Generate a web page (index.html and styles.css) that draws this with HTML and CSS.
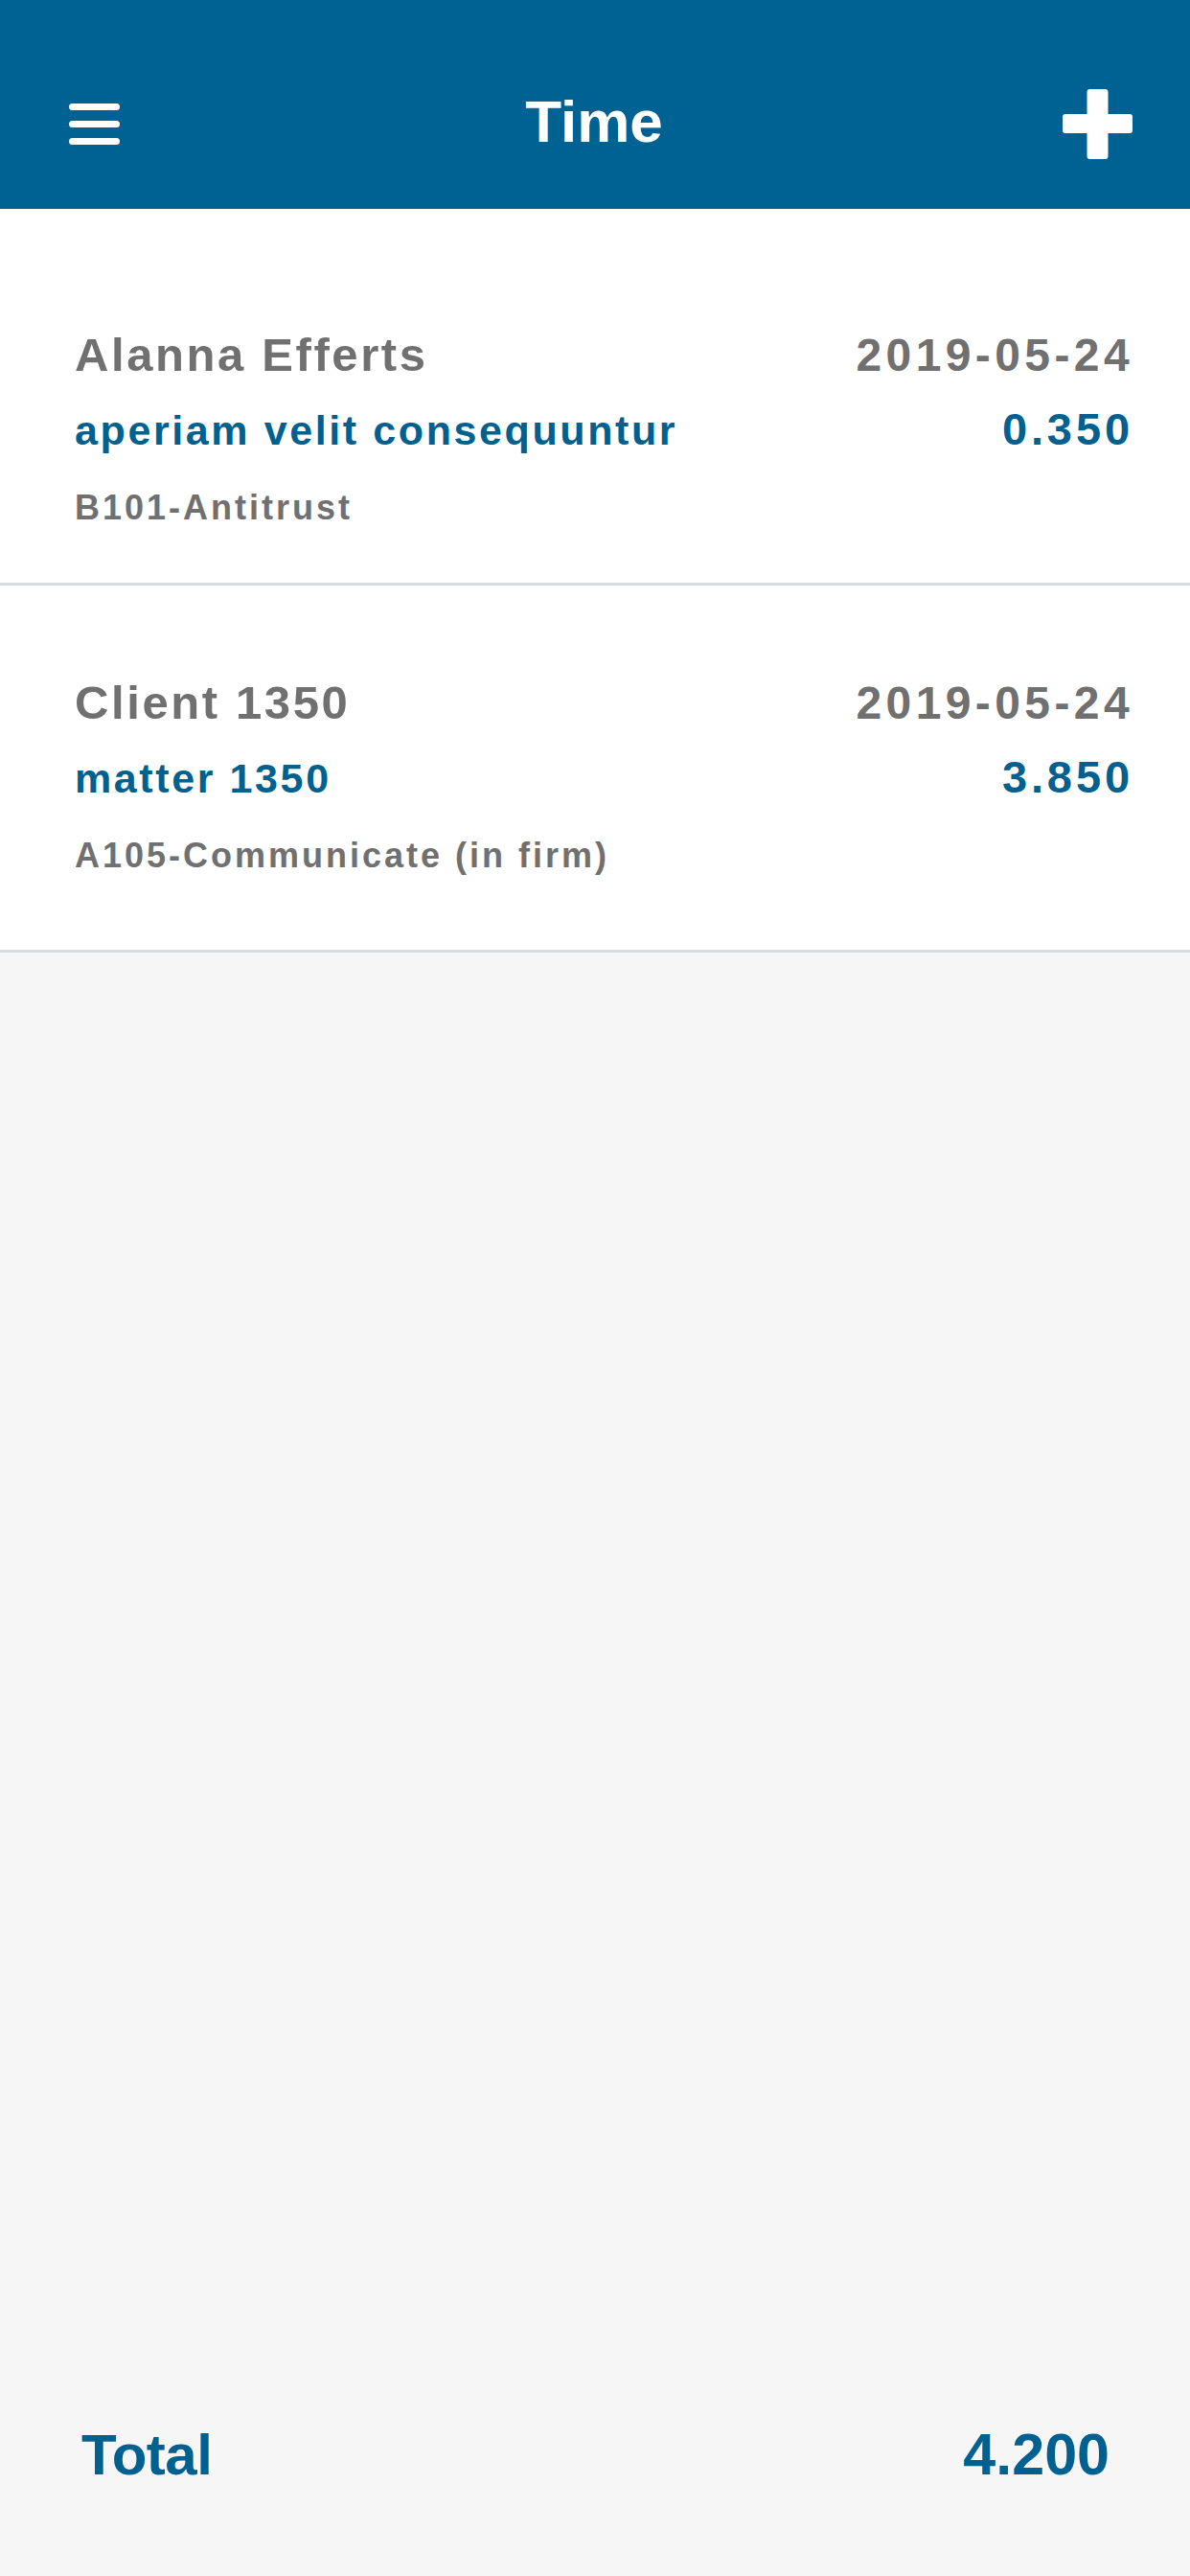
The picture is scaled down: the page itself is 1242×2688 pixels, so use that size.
FILE: index.html
```html
<!DOCTYPE html>
<html lang="en">
<head>
<meta charset="utf-8">
<title>Time</title>
<link rel="stylesheet" href="styles.css">
</head>
<body>
<div class="app">
  <header class="topbar">
    <button class="icon-btn menu" aria-label="Menu">
      <svg width="53" height="43" viewBox="0 0 53 43">
        <rect x="0" y="0" width="53" height="7" rx="3.5" fill="#fff"/>
        <rect x="0" y="18" width="53" height="7" rx="3.5" fill="#fff"/>
        <rect x="0" y="36" width="53" height="7" rx="3.5" fill="#fff"/>
      </svg>
    </button>
    <h1 class="title">Time</h1>
    <button class="icon-btn add" aria-label="Add">
      <svg width="73" height="73" viewBox="0 0 73 73">
        <rect x="25.5" y="0" width="22" height="73" rx="3" fill="#fff"/>
        <rect x="0" y="26" width="73" height="20" rx="3" fill="#fff"/>
      </svg>
    </button>
  </header>

  <main class="entries">
    <div class="entry">
      <div class="row row-top">
        <span class="client">Alanna Efferts</span>
        <span class="date">2019-05-24</span>
      </div>
      <div class="row row-mid">
        <span class="matter">aperiam velit consequuntur</span>
        <span class="hours">0.350</span>
      </div>
      <div class="row row-bottom">
        <span class="activity">B101-Antitrust</span>
      </div>
    </div>
    <div class="entry">
      <div class="row row-top">
        <span class="client">Client 1350</span>
        <span class="date">2019-05-24</span>
      </div>
      <div class="row row-mid">
        <span class="matter">matter 1350</span>
        <span class="hours">3.850</span>
      </div>
      <div class="row row-bottom">
        <span class="activity">A105-Communicate (in firm)</span>
      </div>
    </div>
  </main>

  <div class="spacer"></div>

  <footer class="totals">
    <span class="total-label">Total</span>
    <span class="total-value">4.200</span>
  </footer>
</div>
</body>
</html>
```

FILE: styles.css
```css
* {
  box-sizing: border-box;
}

html, body {
  margin: 0;
  padding: 0;
}

body {
  background: #f6f6f6;
  font-family: "Liberation Sans", Arial, Helvetica, sans-serif;
}

.app {
  min-height: 100vh;
  display: flex;
  flex-direction: column;
}

.topbar {
  height: 218px;
  background: #006193;
  padding: 40px 60px 0 72px;
  display: flex;
  align-items: center;
  justify-content: space-between;
}

.icon-btn {
  background: none;
  border: 0;
  padding: 0;
  margin: 0;
  display: flex;
  align-items: center;
  justify-content: center;
  cursor: pointer;
}

.menu svg,
.add svg {
  display: block;
}

.title {
  margin: -4px 0 0 6px;
  color: #ffffff;
  font-size: 62px;
  font-weight: 700;
  line-height: 1;
}

.entries {
  background: #ffffff;
  padding-top: 30px;
}

.entry {
  background: #ffffff;
  padding: 92px 59px 74px 78px;
  border-bottom: 3px solid #d9dcdf;
}

.entry:first-child {
  padding-bottom: 54px;
}

.row {
  display: flex;
  justify-content: space-between;
  align-items: baseline;
}

.row-top {
  line-height: 60px;
}

.row-mid {
  margin-top: 19px;
  line-height: 56px;
}

.row-bottom {
  margin-top: 29px;
  line-height: 48px;
}

.client {
  color: #707070;
  font-size: 49px;
  font-weight: 700;
  letter-spacing: 2.6px;
}

.date {
  color: #707070;
  font-size: 48px;
  font-weight: 700;
  letter-spacing: 4.4px;
}

.matter {
  color: #00608f;
  font-size: 43px;
  font-weight: 700;
  letter-spacing: 2.6px;
}

.hours {
  color: #00608f;
  font-size: 47px;
  font-weight: 700;
  letter-spacing: 3.9px;
}

.activity {
  color: #707070;
  font-size: 36px;
  font-weight: 700;
  letter-spacing: 3px;
}

.spacer {
  flex: 1;
}

.totals {
  display: flex;
  justify-content: space-between;
  align-items: baseline;
  padding: 40px 84px 96px 85px;
  line-height: 1;
}

.total-label {
  color: #00608f;
  font-size: 60px;
  font-weight: 700;
  letter-spacing: -0.5px;
}

.total-value {
  color: #00608f;
  font-size: 61px;
  font-weight: 700;
}
```
